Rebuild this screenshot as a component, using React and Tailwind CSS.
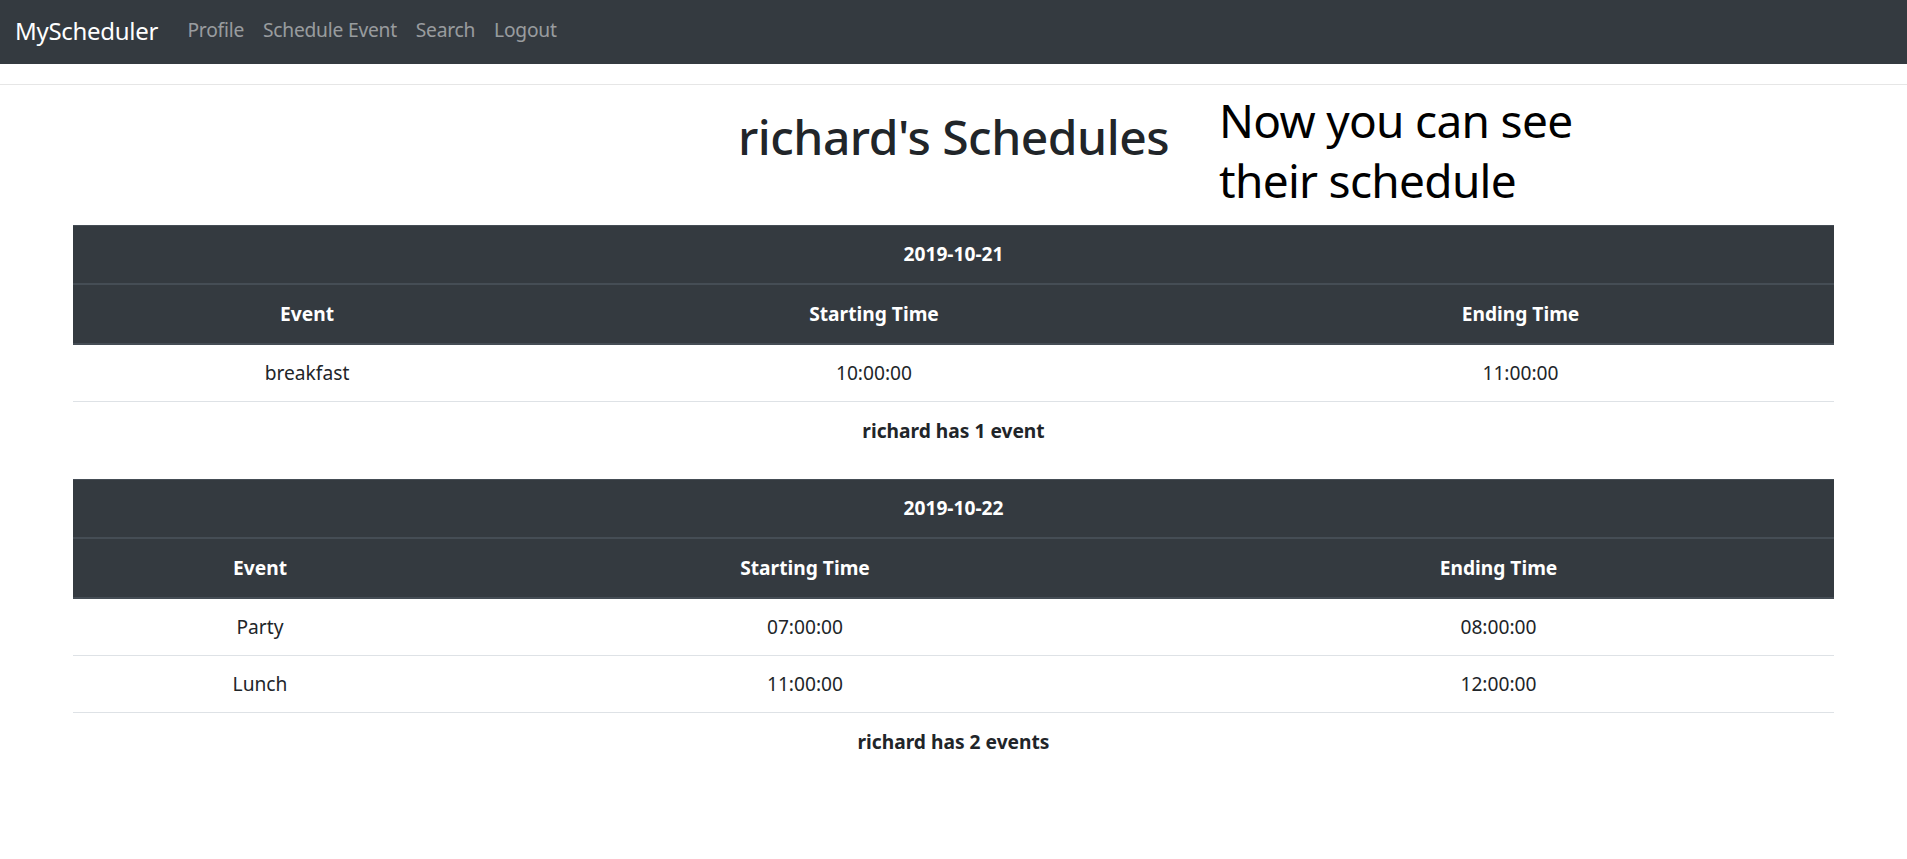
const navLinks = ["Profile", "Schedule Event", "Search", "Logout"];

const schedules = [
  {
    date: "2019-10-21",
    cols: "grid-cols-[468px_666px_627px]",
    events: [{ name: "breakfast", start: "10:00:00", end: "11:00:00" }],
  },
  {
    date: "2019-10-22",
    cols: "grid-cols-[374px_716px_671px]",
    events: [
      { name: "Party", start: "07:00:00", end: "08:00:00" },
      { name: "Lunch", start: "11:00:00", end: "12:00:00" },
    ],
  },
];

function DayTable({ date, cols, events }) {
  return (
    <div className="mb-[19px]">
      <div className="h-[60px] bg-[#343a40] border-t border-b-2 border-[#454d55] flex items-center justify-center text-white font-bold">
        {date}
      </div>
      <div
        className={`grid ${cols} h-[60px] bg-[#343a40] border-b-2 border-[#454d55] items-center text-white font-bold text-center`}
      >
        <div>Event</div>
        <div>Starting Time</div>
        <div>Ending Time</div>
      </div>
      {events.map((ev) => (
        <div
          key={ev.name}
          className={`grid ${cols} h-[57px] border-b border-[#dee2e6] items-center text-center`}
        >
          <div>{ev.name}</div>
          <div>{ev.start}</div>
          <div>{ev.end}</div>
        </div>
      ))}
      <div className="h-[58px] flex items-center justify-center font-bold">
        richard has {events.length} {events.length === 1 ? "event" : "events"}
      </div>
    </div>
  );
}

export default function App() {
  return (
    <div className="min-h-screen bg-white text-[#212529] text-[19.2px] font-['Noto_Sans',sans-serif]">
      {/* Navbar */}
      <nav className="h-[64px] bg-[#343a40] flex items-center px-[15px] pb-[3px]">
        <a className="text-white text-[24px] mr-[20px] tracking-[-0.3px]">MyScheduler</a>
        <div className="flex items-center">
          {navLinks.map((l) => (
            <a key={l} className="px-[9.4px] text-[19.2px] text-white/50 tracking-[-0.2px]">
              {l}
            </a>
          ))}
        </div>
      </nav>

      <div className="h-[20px]" />
      <div className="border-t border-[#e6e6e6]" />

      {/* Heading */}
      <div className="grid grid-cols-[1fr_auto_1fr] items-start pt-[5px] h-[140px]">
        <div />
        <h1 className="mt-[18px] text-[48px] font-medium leading-[1.2] tracking-[-0.5px]">
          richard's Schedules
        </h1>
        <div className="ml-[50px] w-[400px] text-[46px] leading-[60px] text-black tracking-[-0.7px]">
          Now you can see
          <br />
          their schedule
        </div>
      </div>

      {/* Tables */}
      <div className="px-[73px]">
        {schedules.map((s) => (
          <DayTable key={s.date} {...s} />
        ))}
      </div>
    </div>
  );
}
